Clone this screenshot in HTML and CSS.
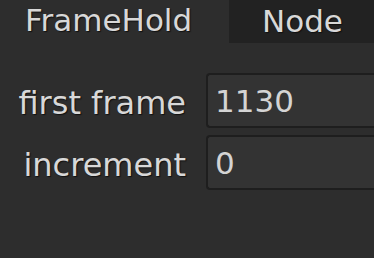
FILE: index.html
```html
<!DOCTYPE html>
<html>
<head>
<meta charset="utf-8">
<link rel="stylesheet" href="styles.css">
</head>
<body>
<div class="tabs">
  <div class="tab active">FrameHold</div>
  <div class="tab">Node</div>
</div>
<div class="form">
  <label class="label">first frame</label>
  <div class="field">1130</div>
  <label class="label">increment</label>
  <div class="field">0</div>
</div>
</body>
</html>
```
FILE: styles.css
```css
html, body {
  margin: 0;
  padding: 0;
  background: #2d2d2d;
  width: 374px;
  height: 258px;
  overflow: hidden;
  font-family: "DejaVu Sans", Verdana, sans-serif;
  color: #d8d8d8;
}
.tabs {
  display: flex;
  height: 43px;
}
.tab {
  font-size: 31px;
  line-height: 43px;
  height: 43px;
  text-shadow: 1px 1px 1px #111;
  box-sizing: border-box;
  white-space: nowrap;
}
.tab.active {
  width: 229px;
  padding-left: 25px;
  line-height: 41px;
}
.tab:not(.active) {
  flex: 1;
  background: #222222;
  padding-left: 33px;
}
.form {
  display: grid;
  grid-template-columns: 186px 1fr;
  column-gap: 20px;
  row-gap: 7px;
  margin-top: 30px;
}
.label {
  text-align: right;
  font-size: 32px;
  line-height: 50px;
  padding-top: 5px;
  text-shadow: 1px 1px 1px #111;
  white-space: nowrap;
}
.field {
  height: 55px;
  box-sizing: border-box;
  background: #333333;
  border: 2px solid #1e1e1e;
  border-right: none;
  border-radius: 4px 0 0 4px;
  font-size: 31px;
  line-height: 47px;
  padding-top: 3px;
  padding-left: 7px;
  color: #d4d4d4;
}
```
